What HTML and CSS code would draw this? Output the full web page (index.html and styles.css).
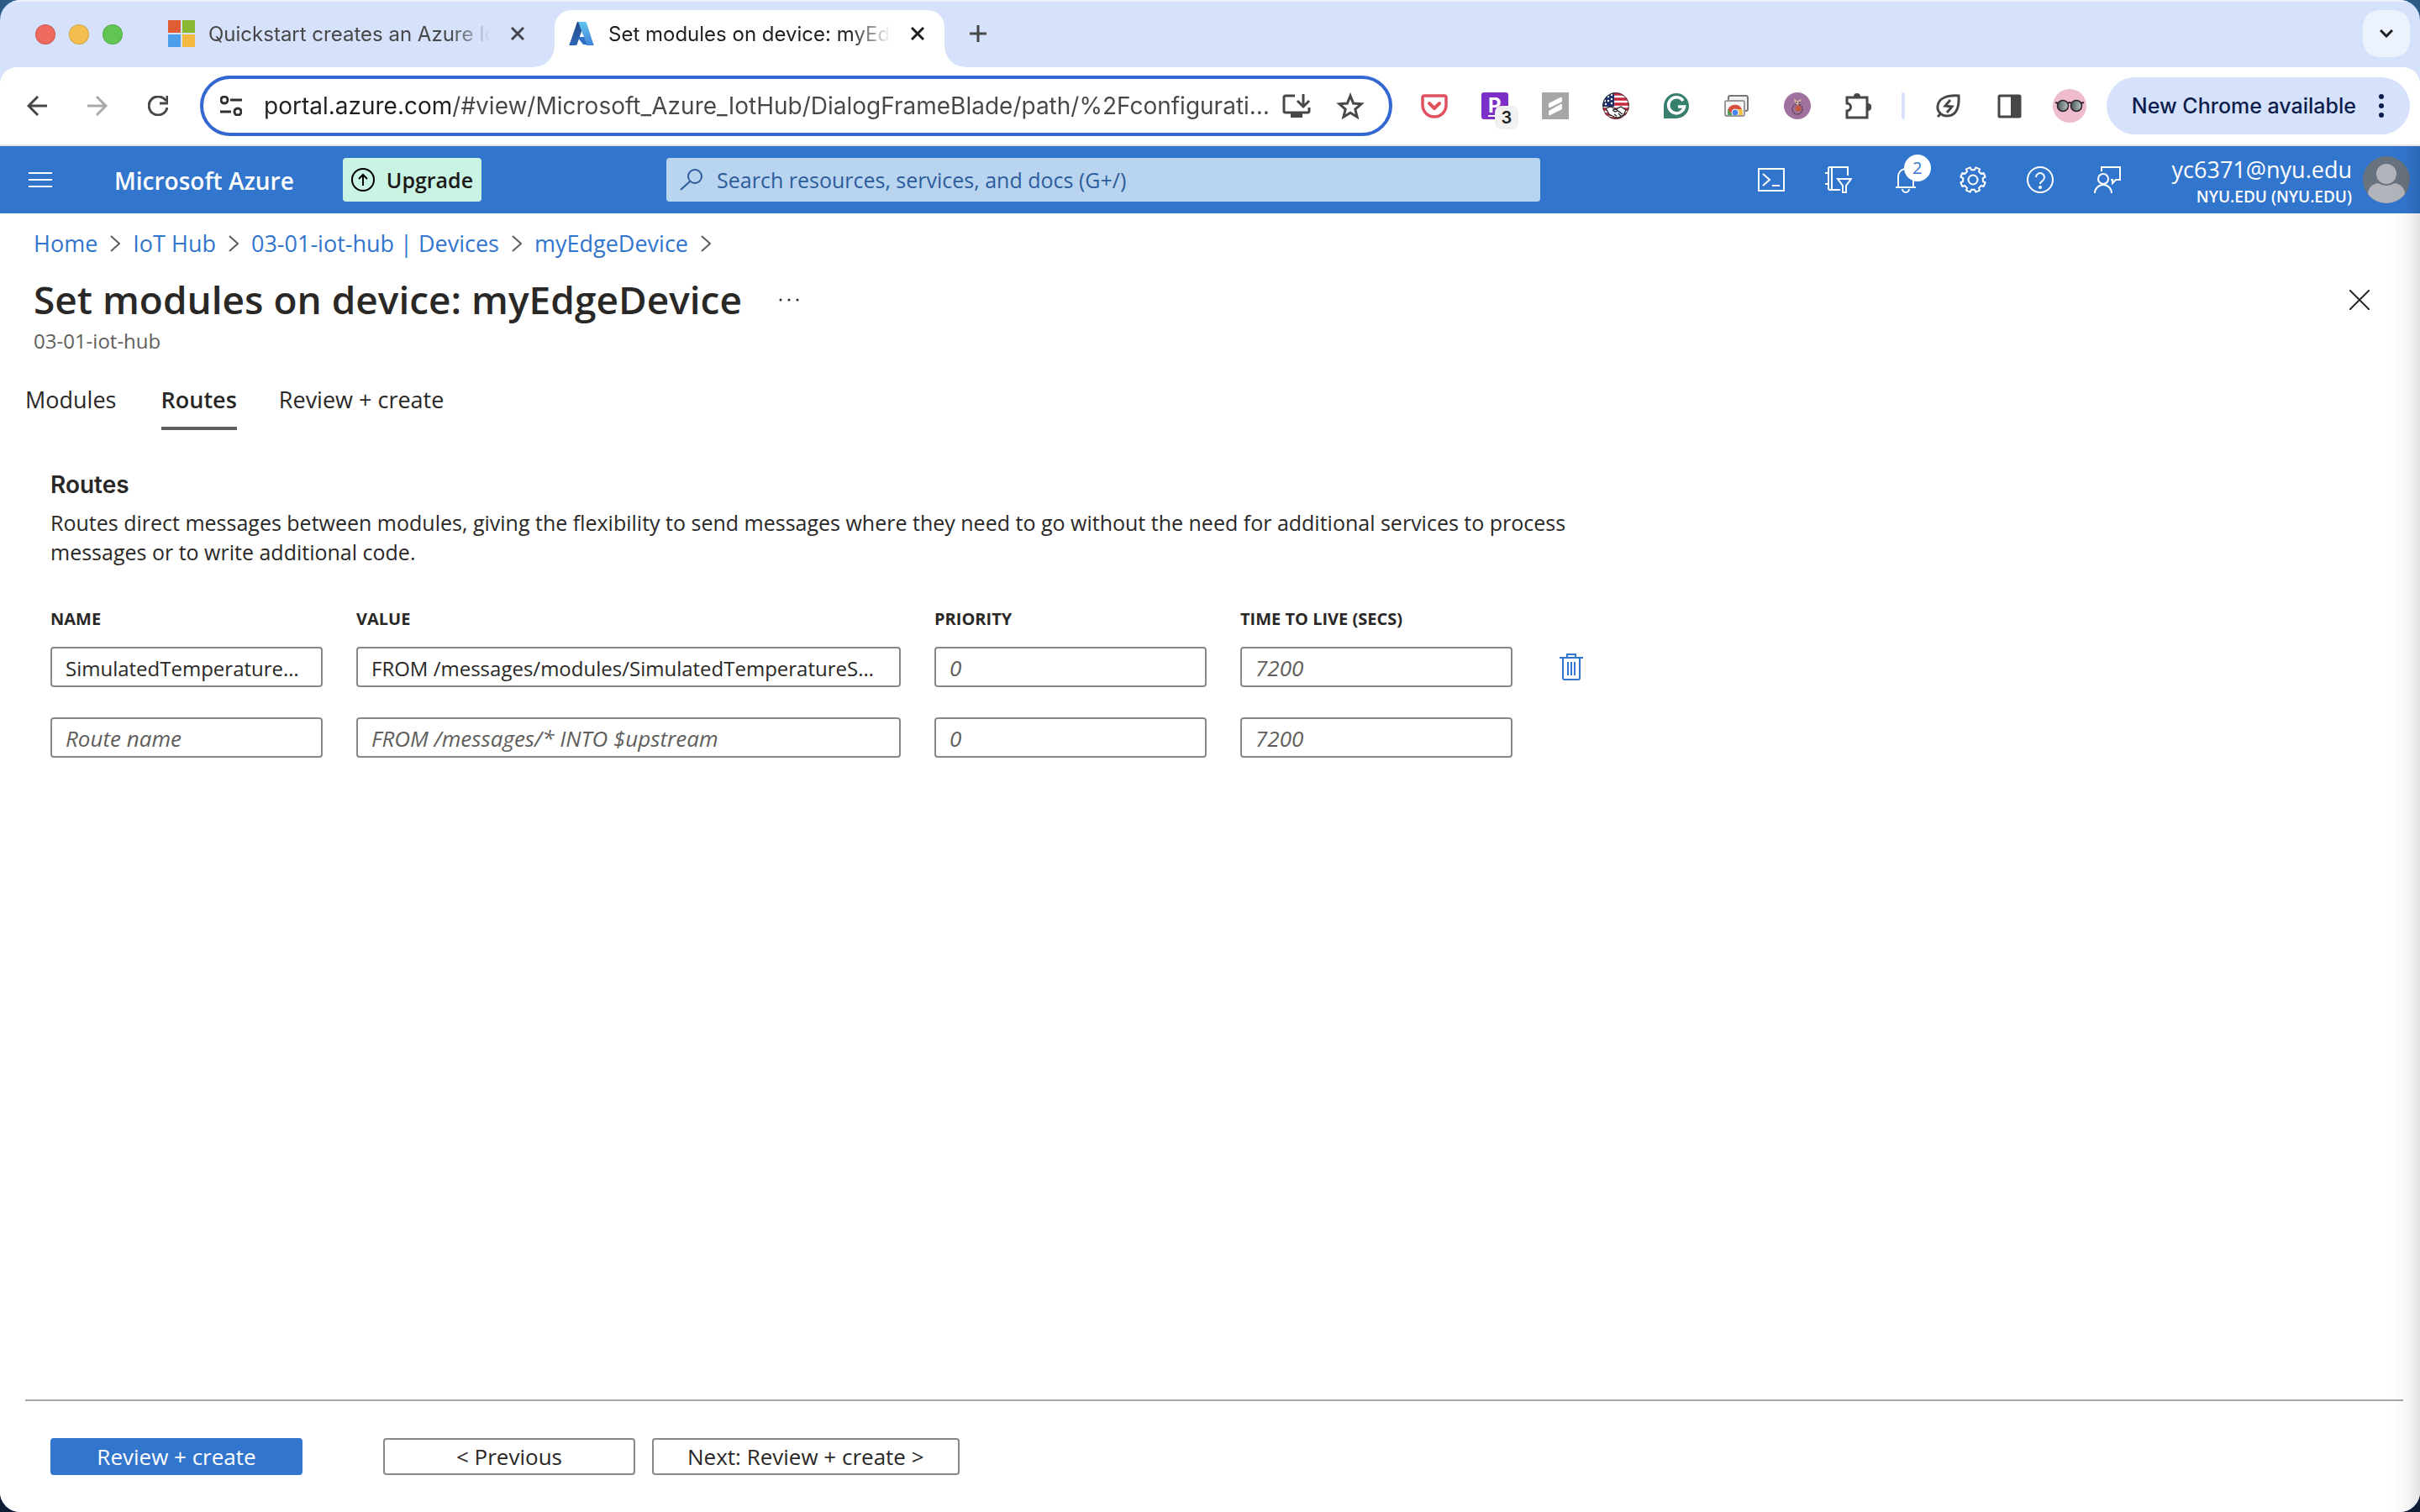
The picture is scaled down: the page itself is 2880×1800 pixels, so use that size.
FILE: index.html
```html
<!DOCTYPE html>
<html lang="en">
<head>
<meta charset="utf-8">
<title>Set modules on device: myEdgeDevice - Microsoft Azure</title>
<link rel="stylesheet" href="styles.css">
</head>
<body>
<div class="window">

  <div class="tabstrip">
    <div class="lights">
      <span class="light light-red"></span>
      <span class="light light-yellow"></span>
      <span class="light light-green"></span>
    </div>
    <div class="tab">
      <svg class="icon" viewBox="0 0 32 32" aria-hidden="true"><path fill="#e05c34" d="M0 0h15v15H0z"/><path fill="#8ab833" d="M17 0h15v15H17z"/><path fill="#4a9fe8" d="M0 17h15v15H0z"/><path fill="#f5b940" d="M17 17h15v15H17z"/></svg>
      <span class="tab-title">Quickstart creates an Azure IoT Edge device</span>
      <button class="bare" aria-label="Close tab"><svg class="icon-close" viewBox="0 0 16 16"><path d="M1 1l14 14M15 1L1 15"/></svg></button>
    </div>
    <div class="tab tab-active">
      <svg class="icon" viewBox="0 0 32 32" aria-hidden="true">
        <defs>
          <linearGradient id="az-dark" x1="0" y1="0" x2="0" y2="1"><stop offset="0" stop-color="#234a86"/><stop offset="1" stop-color="#2d66b8"/></linearGradient>
          <linearGradient id="az-light" x1="0" y1="0" x2="0" y2="1"><stop offset="0" stop-color="#62c4f0"/><stop offset="1" stop-color="#3f83d8"/></linearGradient>
        </defs>
        <path fill="url(#az-dark)" d="M11 2h9l-9 26a2 2 0 0 1-2 2H3a1 1 0 0 1-1-2z"/>
        <path fill="#2f6fc4" d="M11 20h13l2 9h-8z"/>
        <path fill="url(#az-light)" d="M12 2h8a2 2 0 0 1 2 1l8 25a1 1 0 0 1-1 2h-8a2 2 0 0 0 1-2z"/>
      </svg>
      <span class="tab-title">Set modules on device: myEdgeDevice</span>
      <button class="bare" aria-label="Close tab"><svg class="icon-close" viewBox="0 0 16 16"><path d="M1 1l14 14M15 1L1 15"/></svg></button>
    </div>
    <button class="bare new-tab" aria-label="New tab"><svg class="icon-plus" viewBox="0 0 20 20"><path d="M10 0v20M0 10h20"/></svg></button>
    <button class="tab-search" aria-label="Search tabs"><svg viewBox="0 0 16 10"><path d="M1 1l7 7 7-7"/></svg></button>
  </div>

  <div class="toolbar">
    <div class="nav-buttons">
      <button class="bare" aria-label="Back"><svg viewBox="0 0 24 24"><path d="M24 12H2M13 1L2 12l11 11"/></svg></button>
      <button class="bare disabled" aria-label="Forward" disabled><svg viewBox="0 0 24 24"><path d="M0 12h22M11 1l11 11-11 11"/></svg></button>
      <button class="bare" aria-label="Reload"><svg viewBox="0 0 24 24"><path d="M21.500 6A11 11 0 1 0 23 14M23 0v9h-9"/></svg></button>
    </div>
    <div class="omnibox">
      <button class="bare" aria-label="View site information"><svg class="tune" viewBox="0 0 26 24"><circle cx="5" cy="5" r="4"/><path d="M12 5h14M0 19h13"/><circle cx="21" cy="19" r="4"/></svg></button>
      <input class="url" type="text" aria-label="Address" value="portal.azure.com/#view/Microsoft_Azure_IotHub/DialogFrameBlade/path/%2Fconfigurations%2FmyEdgeDevice">
      <button class="bare" aria-label="Install app"><svg class="stroke-dark install" viewBox="0 0 34 32"><path d="M15 4H4a2 2 0 0 0-2 2v16a2 2 0 0 0 2 2h26a2 2 0 0 0 2-2v-4M25 2v14M18 10l7 7 7-7"/><path class="solid" d="M10 24h14v6H10z"/></svg></button>
      <button class="bare" aria-label="Bookmark"><svg class="stroke-dark star" viewBox="0 0 34 32"><path d="M17 4l3.600 9 9.400.8-7.200 6.200 2.300 9.200L17 24.200l-8.100 5 2.300-9.200L4 13.800l9.400-.8z"/></svg></button>
    </div>

    <div class="extensions">
      <button class="bare" aria-label="Pocket"><svg class="icon" viewBox="0 0 32 32"><path fill="none" stroke="#e0505f" stroke-width="3.500" d="M4 4h24a2 2 0 0 1 2 2v9a14 14 0 0 1-28 0V6a2 2 0 0 1 2-2z"/><path fill="none" stroke="#e0505f" stroke-width="4" stroke-linecap="round" stroke-linejoin="round" d="M10 13l6 6 6-6"/></svg></button>
      <button class="bare ext-p" aria-label="Extension, 3 items"><span class="ext-p-letter">P</span><span class="ext-count">3</span></button>
      <button class="bare" aria-label="Scribe"><svg class="icon" viewBox="0 0 32 32"><path fill="#a6a6a6" d="M0 0h32v32H0z"/><path fill="#fff" d="M8 14q0-1 1-1.500L22 6q2-1 2 1v3q0 1-1 1.500L10 18q-2 1-2-1z"/><path fill="#fff" d="M24 15v4q0 1-1 1.500L10 27q-2 1-2-1v-3q0-1 1-1.500L22 14q2-1 2 1z"/></svg></button>
      <button class="bare" aria-label="Flag extension"><svg class="icon" viewBox="0 0 32 32"><clipPath id="disc"><circle cx="16" cy="16" r="16"/></clipPath><g clip-path="url(#disc)"><path fill="#fff" d="M0 0h32v32H0z"/><path stroke="#c8293c" stroke-width="3.500" d="M13 2h19M13 8h19M13 14h19M0 20h32M0 26h32M0 31h32"/><path fill="#1d2f6b" d="M0 0h14v17H0z"/><g fill="#fff"><circle cx="7" cy="5" r="1.200"/><circle cx="11" cy="3" r="1.200"/><circle cx="11" cy="8" r="1.200"/><circle cx="3" cy="10" r="1.200"/><circle cx="7" cy="10" r="1.200"/><circle cx="11" cy="13" r="1.200"/><circle cx="4" cy="14" r="1.200"/></g><path fill="#fff" stroke="#222" stroke-width="1.200" d="M4 19l6-2 6 3 6-3 6 4-3 6-6 3-5-1-6-3z"/><path fill="none" stroke="#222" stroke-width="1.200" d="M12 21l4-1 8 6M12 21l3 2 3-1M14 26l3 2M19 25l3 3"/></g><circle cx="16" cy="16" r="15.300" fill="none" stroke="#333" stroke-width="1"/></svg></button>
      <button class="bare" aria-label="Grammarly"><svg class="icon" viewBox="0 0 32 32"><path fill="#38806e" d="M1 31V16A15 15 0 1 1 16 31z"/><path fill="none" stroke="#fff" stroke-width="3.500" d="M24 10a9.500 9.500 0 1 0 1.500 7H18"/></svg></button>
      <button class="bare" aria-label="Chrome windows"><svg class="icon" viewBox="0 0 32 32"><rect x="6" y="4" width="23" height="18" rx="2" fill="#f1f1f1" stroke="#777" stroke-width="2"/><rect x="2" y="10" width="23" height="18" rx="2" fill="#f5f5f5" stroke="#999" stroke-width="2"/><path fill="#d9503f" d="M5 22a9 9 0 0 1 17-2h-8l-5 7H5z"/><path fill="#f3c242" d="M15 20h7.500l.5 7h-6z"/><path fill="#4da35a" d="M5 20l6 7H5z"/><circle cx="14" cy="24" r="4" fill="#4a84ee" stroke="#fff" stroke-width="1"/><path stroke="#999" stroke-width="2" d="M3 28h21"/></svg></button>
      <button class="bare" aria-label="Cat extension"><svg class="icon" viewBox="0 0 32 32"><circle cx="16" cy="16" r="16" fill="#a0709f"/><circle cx="16" cy="20" r="6" fill="none" stroke="#54404a" stroke-width="1.500" stroke-dasharray="2 1"/><circle cx="17" cy="19" r="3.500" fill="#c0583c"/><path fill="#d8c0a8" d="M12 7l3 3h2l4-3-2 5-3 3-3-3z"/><path fill="#403038" d="M14 11h1.500v1.500H14zM17.500 11H19v1.500h-1.500z"/></svg></button>
      <button class="bare" aria-label="Extensions"><svg class="icon stroke-dark" viewBox="0 0 32 32"><path d="M3 6h24v24H3v-8a4.500 4.500 0 0 0 0-9z"/><path class="solid" d="M11 5a4 4 0 0 1 8 0zM28 13a4 4 0 0 1 0 9z"/></svg></button>
    </div>
    <span class="divider"></span>
    <div class="extensions">
      <button class="bare" aria-label="Energy saver"><svg class="icon stroke-dark" viewBox="0 0 32 32"><path d="M28 4c-14-1-24 3-25 12-1 6 4 12 11 12 10 0 15-8 14-24z"/><path d="M7 25l-4 4M18 9l-6 7 8 1-6 7"/></svg></button>
      <button class="bare" aria-label="Side panel"><svg class="icon stroke-dark" viewBox="0 0 32 32"><rect x="4" y="4" width="25" height="25" rx="1"/><path class="solid" d="M18 4h11v25H18z"/></svg></button>
    </div>
    <button class="bare profile" aria-label="Profile"><svg viewBox="0 0 40 40"><defs><linearGradient id="lens"><stop offset="0" stop-color="#4a5458"/><stop offset="1" stop-color="#b8c4c6"/></linearGradient></defs><circle cx="20" cy="20" r="20" fill="#efbccf"/><g fill="url(#lens)" stroke="#2a2426" stroke-width="1.500"><circle cx="12" cy="20" r="6.500"/><circle cx="28" cy="20" r="6.500"/></g><path fill="none" stroke="#2a2426" stroke-width="2" d="M3 16l4 1M37 16l-4 1M18 17q2-2 4 0"/></svg></button>
    <button class="update">New Chrome available<svg viewBox="0 0 8 28" aria-hidden="true"><circle cx="4" cy="3" r="3"/><circle cx="4" cy="14" r="3"/><circle cx="4" cy="25" r="3"/></svg></button>
  </div>

  <div class="portal">
    <header class="topbar">
      <button class="bare menu" aria-label="Show portal menu"><svg viewBox="0 0 28 18"><path d="M0 1h28M0 9h28M0 17h28"/></svg></button>
      <a class="brand" href="#home">Microsoft Azure</a>
      <button class="upgrade"><svg viewBox="0 0 28 28" aria-hidden="true"><circle cx="14" cy="14" r="13"/><path d="M14 21V8M9 13l5-5 5 5"/></svg>Upgrade</button>
      <div class="search">
        <svg viewBox="0 0 28 26" aria-hidden="true"><circle cx="18" cy="9" r="8"/><path d="M12 15L1 25"/></svg>
        <input type="text" aria-label="Search" placeholder="Search resources, services, and docs (G+/)">
      </div>
      <nav class="tools" aria-label="Portal tools">
        <button class="bare" aria-label="Cloud Shell"><svg viewBox="0 0 32 32"><path d="M1 3h30v26H1z"/><path d="M6 9l8 7-8 7M17 23h9"/></svg></button>
        <button class="bare" aria-label="Directories and subscriptions"><svg viewBox="0 0 32 32"><path d="M27 11V1H6a2 2 0 0 0-2 2v23a2 2 0 0 0 2 2h12M8 1v27M0 8h5M0 21h5"/><path d="M15 15h16l-6 8v8h-4v-8z"/></svg></button>
        <button class="bare bell" aria-label="Notifications, 2 new"><svg viewBox="0 0 32 32"><path d="M4 25h24M7 25V12a9 9 0 0 1 18 0v13M12 27a4 4 0 0 0 8 0"/></svg><span class="badge">2</span></button>
        <button class="bare" aria-label="Settings"><svg viewBox="0 0 32 32"><g transform="translate(16 16)"><path stroke-linejoin="round" d="M11.840 1.980L14.640 3.250 12.650 8.060 9.770 6.970 6.970 9.770 8.060 12.650 3.250 14.640 1.980 11.840-1.980 11.840-3.250 14.640-8.060 12.650-6.970 9.770-9.770 6.970-12.650 8.060-14.640 3.250-11.840 1.980-11.840-1.980-14.640-3.250-12.650-8.060-9.770-6.970-6.970-9.770-8.060-12.650-3.250-14.640-1.980-11.840 1.980-11.840 3.250-14.640 8.060-12.650 6.970-9.770 9.770-6.970 12.650-8.060 14.640-3.250 11.840-1.980z"/><circle r="5.500"/></g></svg></button>
        <button class="bare" aria-label="Help"><svg viewBox="0 0 32 32"><circle cx="16" cy="16" r="15"/><path d="M11 13a5 5 0 1 1 8 4q-3 2-3 4"/><circle class="dot" cx="16" cy="25" r="2"/></svg></button>
        <button class="bare" aria-label="Feedback"><svg viewBox="0 0 32 32"><path d="M9 6V1h22v15h-5l-4 4v-4h-2"/><circle cx="11" cy="15" r="6"/><path d="M1 32a10 10 0 0 1 20 0"/></svg></button>
      </nav>
      <button class="bare account">
        <span class="account-text"><span class="email">yc6371@nyu.edu</span><span class="tenant">NYU.EDU (NYU.EDU)</span></span>
        <svg viewBox="0 0 56 56" aria-hidden="true"><clipPath id="face"><circle cx="28" cy="28" r="28"/></clipPath><g clip-path="url(#face)"><path fill="#69737f" d="M0 0h56v56H0z"/><circle cx="28" cy="21" r="12" fill="#b1b4ba"/><path fill="#b1b4ba" d="M6 56V46q0-12 12-14 10 6 20 0 12 2 12 14v10z"/></g></svg>
      </button>
    </header>

    <main class="blade">
      <nav class="crumbs" aria-label="Breadcrumb">
        <a href="#home">Home</a><svg viewBox="0 0 12 20"><path d="M1 1l10 9-10 9"/></svg>
        <a href="#hub">IoT Hub</a><svg viewBox="0 0 12 20"><path d="M1 1l10 9-10 9"/></svg>
        <a href="#devices">03-01-iot-hub | Devices</a><svg viewBox="0 0 12 20"><path d="M1 1l10 9-10 9"/></svg>
        <a href="#device">myEdgeDevice</a><svg viewBox="0 0 12 20"><path d="M1 1l10 9-10 9"/></svg>
      </nav>
      <div class="title-row">
        <h1>Set modules on device: myEdgeDevice</h1>
        <button class="bare more" aria-label="More"><svg viewBox="0 0 24 4"><circle cx="2" cy="2" r="1.500"/><circle cx="12" cy="2" r="1.500"/><circle cx="22" cy="2" r="1.500"/></svg></button>
        <button class="bare close-blade" aria-label="Close"><svg viewBox="0 0 24 24"><path d="M0 0l24 24M24 0L0 24"/></svg></button>
      </div>
      <p class="subtitle">03-01-iot-hub</p>

      <div class="steps" role="tablist">
        <button class="step" role="tab" data-label="Modules">Modules</button>
        <button class="step step-active" role="tab" aria-selected="true" data-label="Routes">Routes</button>
        <button class="step" role="tab" data-label="Review + create">Review + create</button>
      </div>

      <section class="panel">
        <h2>Routes</h2>
        <p class="intro">Routes direct messages between modules, giving the flexibility to send messages where they need to go without the need for additional services to process messages or to write additional code.</p>
        <table class="routes">
          <colgroup><col class="col-small"><col class="col-wide"><col class="col-small"><col class="col-small"><col class="col-action"></colgroup>
          <thead>
            <tr><th id="h-name">NAME</th><th id="h-value">VALUE</th><th id="h-priority">PRIORITY</th><th id="h-ttl">TIME TO LIVE (SECS)</th><td></td></tr>
          </thead>
          <tbody>
            <tr>
              <td><input type="text" aria-labelledby="h-name" value="SimulatedTemperatureSensorToIoTHub"></td>
              <td><input type="text" aria-labelledby="h-value" value="FROM /messages/modules/SimulatedTemperatureSensor/* INTO $upstream"></td>
              <td><input type="text" aria-labelledby="h-priority" placeholder="0"></td>
              <td><input type="text" aria-labelledby="h-ttl" placeholder="7200"></td>
              <td><button class="bare delete" aria-label="Delete route"><svg viewBox="0 0 28 32"><path d="M0 5h28M9 5V1h10v4M4 5v24a2 2 0 0 0 2 2h16a2 2 0 0 0 2-2V5"/><path d="M10 10v16M14 10v16M18 10v16"/></svg></button></td>
            </tr>
            <tr>
              <td><input type="text" aria-labelledby="h-name" placeholder="Route name"></td>
              <td><input type="text" aria-labelledby="h-value" placeholder="FROM /messages/* INTO $upstream"></td>
              <td><input type="text" aria-labelledby="h-priority" placeholder="0"></td>
              <td><input type="text" aria-labelledby="h-ttl" placeholder="7200"></td>
              <td></td>
            </tr>
          </tbody>
        </table>
      </section>
    </main>

    <footer class="actions">
      <button class="btn btn-primary">Review + create</button>
      <button class="btn">&lt; Previous</button>
      <button class="btn">Next: Review + create &gt;</button>
    </footer>
  </div>
</div>
</body>
</html>
```
FILE: styles.css
```css
:root {
  --chrome-font: Inter, Roboto, sans-serif;
  --portal-font: "Open Sans", "Noto Sans", sans-serif;
  --blue: #3275cd;
  --ink: #292827;
  --muted: #605e5c;
  --line: #8a8886;
  --chrome-blue: #d6e1fb;
  --chrome-ink: #474747;
}

* { box-sizing: border-box; }

body {
  margin: 0;
  background: linear-gradient(#2c5b88, #0f1c36);
  color: var(--ink);
  font-family: var(--portal-font);
}

button, input { font: inherit; color: inherit; }
button { cursor: pointer; }
a { color: inherit; text-decoration: none; }
svg { display: block; flex: none; fill: none; }
h1, h2, p { margin: 0; }

.bare {
  display: flex;
  align-items: center;
  padding: 0;
  border: 0;
  background: none;
}

.icon { width: 32px; height: 32px; }

.window {
  display: flex;
  flex-direction: column;
  min-height: 100vh;
  border-radius: 24px;
  overflow: hidden;
  background: var(--chrome-blue);
}

/* Browser tabs */
.tabstrip {
  display: flex;
  align-items: center;
  height: 80px;
  padding: 10px 12px 0 42px;
  border-top: 2px solid #eef2fd;
  font-family: var(--chrome-font);
  font-size: 24px;
  color: var(--chrome-ink);
}

.lights { display: flex; gap: 16px; padding-bottom: 10px; }
.light { width: 24px; height: 24px; border-radius: 50%; border: 1px solid #0002; }
.light-red { background: #ec6a5e; }
.light-yellow { background: #f4bf4f; }
.light-green { background: #61c554; }

.tab {
  position: relative;
  display: flex;
  align-items: center;
  gap: 16px;
  width: 464px;
  height: 68px;
  padding: 0 24px 12px 16px;
}

.lights + .tab { margin-left: 38px; width: 476px; padding-right: 36px; }

.tab-active {
  border-radius: 20px 20px 0 0;
  background: #fff;
  color: #1f1f1f;
}

.tab-active::before,
.tab-active::after {
  content: "";
  position: absolute;
  bottom: 0;
  width: 24px;
  height: 24px;
}
.tab-active::before { right: 100%; background: radial-gradient(circle at 0 0, #fff0 23px, #fff 24px); }
.tab-active::after { left: 100%; background: radial-gradient(circle at 100% 0, #fff0 23px, #fff 24px); }

.tab-title {
  flex: 1;
  overflow: hidden;
  white-space: nowrap;
  margin-right: 8px;
  -webkit-mask-image: linear-gradient(to left, transparent, #000 48px);
  mask-image: linear-gradient(to left, transparent, #000 48px);
}

.icon-close { width: 16px; height: 16px; stroke: currentColor; stroke-width: 3; }
.icon-plus { width: 20px; height: 20px; stroke: currentColor; stroke-width: 3; }
.new-tab { margin-left: 30px; padding-bottom: 12px; }

.tab-search {
  display: flex;
  align-items: center;
  justify-content: center;
  width: 56px;
  height: 56px;
  margin: 0 0 12px auto;
  padding: 0;
  border: 0;
  border-radius: 20px;
  background: #ecf3fd;
}
.tab-search svg { width: 16px; height: 10px; stroke: #1f1f1f; stroke-width: 3; }

/* Browser toolbar */
.toolbar {
  display: flex;
  align-items: center;
  height: 94px;
  padding: 0 12px 0 32px;
  border-bottom: 2px solid #dfe3e3;
  border-radius: 20px 20px 0 0;
  background: #fff;
  font-family: var(--chrome-font);
}

.nav-buttons { display: flex; gap: 48px; }
.nav-buttons svg { width: 24px; height: 24px; stroke: var(--chrome-ink); stroke-width: 3; }
.nav-buttons .disabled svg { stroke: #a9a9a9; }

.omnibox {
  display: flex;
  flex: 1;
  align-items: center;
  height: 72px;
  margin: 0 34px 0 38px;
  padding: 0 29px 0 20px;
  border: 4px solid #3367d1;
  border-radius: 36px;
}

.tune { width: 26px; height: 24px; stroke: #303030; stroke-width: 3; }

.url {
  flex: 1;
  min-width: 0;
  margin: 0 8px 0 26px;
  padding: 0;
  border: 0;
  outline: 0;
  font-size: 28px;
  line-height: 40px;
  text-overflow: ellipsis;
  color: transparent;
  background: linear-gradient(to right, #1f1f1f 222px, #474747 222px);
  -webkit-background-clip: text;
  background-clip: text;
}

.stroke-dark { stroke: var(--chrome-ink); stroke-width: 3; }
.solid { fill: var(--chrome-ink); stroke: none; }
.install, .star { width: 34px; height: 32px; }
.omnibox .bare:last-child { margin-left: 30px; }

.extensions { display: flex; gap: 40px; }

.ext-p {
  position: relative;
  justify-content: center;
  width: 32px;
  height: 32px;
  border-radius: 3px;
  background: #7b2fc6;
  color: #fff;
}
.ext-p-letter { font-size: 24px; font-weight: 700; line-height: 28px; text-decoration: underline; text-underline-offset: 3px; }
.ext-count {
  position: absolute;
  left: 16px;
  top: 16px;
  width: 28px;
  border-radius: 8px;
  background: #f1f1f1;
  color: #1f1f1f;
  font-size: 20px;
  font-weight: 600;
  line-height: 28px;
  text-align: center;
}

.divider { width: 4px; height: 32px; margin: 0 36px; border-radius: 2px; background: var(--chrome-blue); }

.profile { margin: 0 24px 0 36px; }
.profile svg { width: 40px; height: 40px; }

.update {
  display: flex;
  align-items: center;
  gap: 26px;
  height: 68px;
  padding: 0 30px;
  border: 0;
  border-radius: 34px;
  background: var(--chrome-blue);
  color: #0a1d4d;
  font-size: 25px;
  font-weight: 500;
  white-space: nowrap;
}
.update svg { width: 8px; height: 28px; fill: #0a1d4d; }

/* Portal */
.portal {
  position: relative;
  display: flex;
  flex: 1;
  flex-direction: column;
  background: #fff;
}

/* Soft shade along the right edge of the window */
.portal::after {
  content: "";
  position: absolute;
  inset: 0 0 0 auto;
  width: 36px;
  background: linear-gradient(to right, #0000, #00000006 50%, #0000001c);
  pointer-events: none;
}

.topbar {
  display: flex;
  align-items: center;
  height: 80px;
  padding: 0 12px 0 34px;
  background: var(--blue);
  color: #fff;
}

.menu svg { width: 28px; height: 18px; stroke: #fff; stroke-width: 2; }

.brand {
  margin: 2px 58px 0 74px;
  font-size: 28px;
  font-weight: 600;
  white-space: nowrap;
}

.upgrade {
  display: flex;
  align-items: center;
  gap: 14px;
  height: 52px;
  margin-right: 220px;
  padding: 0 10px;
  border: 0;
  border-radius: 4px;
  background: #c9f3e3;
  color: #1b1a19;
  font-size: 25px;
  font-weight: 600;
}
.upgrade svg { width: 28px; height: 28px; stroke: #000; stroke-width: 2; }

.search {
  display: flex;
  flex: 0 1 1040px;
  align-items: center;
  gap: 16px;
  height: 52px;
  padding: 0 16px;
  border-radius: 4px;
  background: #b9d4ef;
}
.search svg { width: 28px; height: 26px; stroke: #2c5c9c; stroke-width: 2; }
.search input {
  flex: 1;
  min-width: 0;
  padding: 0;
  border: 0;
  background: none;
  font-size: 25px;
}
.search input::placeholder { color: #2c5c9c; opacity: 1; }

.tools { display: flex; gap: 48px; margin-left: auto; }
.tools svg { width: 32px; height: 32px; stroke: #fff; stroke-width: 2; }
.tools .dot { fill: #fff; stroke: none; }

.bell { position: relative; }
.badge {
  position: absolute;
  left: 14px;
  top: -14px;
  width: 32px;
  border-radius: 50%;
  background: #fff;
  color: var(--blue);
  font-size: 20px;
  line-height: 32px;
  text-align: center;
}

.account { gap: 13px; margin-left: 61px; }
.account svg { width: 56px; height: 56px; }
.account-text { display: flex; flex-direction: column; align-items: flex-end; padding-top: 8px; line-height: 32px; white-space: nowrap; }
.email { font-size: 27px; }
.tenant { font-size: 19px; font-weight: 600; }

.blade { flex: 1; padding: 16px 60px 40px 30px; }

.crumbs {
  display: flex;
  align-items: center;
  gap: 15px;
  padding-left: 10px;
  color: var(--blue);
  font-size: 27px;
  line-height: 40px;
}
.crumbs svg { width: 12px; height: 20px; stroke: var(--muted); stroke-width: 2; }

.title-row { display: flex; align-items: center; margin-top: 16px; padding-left: 10px; }
h1 { font-size: 46px; font-weight: 600; line-height: 60px; }
.more, .close-blade { padding-top: 2px; }
.more { margin-left: 44px; }
.more svg { width: 24px; height: 4px; fill: var(--ink); }
.close-blade { margin-left: auto; }
.close-blade svg { width: 24px; height: 24px; stroke: var(--ink); stroke-width: 2; }

.subtitle { padding-left: 10px; color: var(--muted); font-size: 24px; line-height: 40px; }

.steps { display: flex; gap: 50px; margin-top: 32px; }
.step {
  padding: 0 0 14px;
  border: 0;
  border-bottom: 4px solid transparent;
  background: none;
  font-size: 27px;
  line-height: 36px;
  text-align: left;
}
/* Reserves the bold width so that tabs do not shift when selected */
.step::after {
  content: attr(data-label);
  display: block;
  height: 0;
  overflow: hidden;
  visibility: hidden;
  font-weight: 600;
}
.step-active { border-color: var(--muted); font-weight: 600; }

.panel { padding: 47px 0 0 30px; }
h2 { font-family: var(--chrome-font); font-size: 28px; font-weight: 600; line-height: 36px; }
.intro { max-width: 1820px; margin-top: 10px; font-size: 25px; line-height: 35px; }

.routes { margin-top: 48px; border-collapse: collapse; table-layout: fixed; width: 1830px; max-width: 100%; }
.col-small { width: 364px; }
.col-wide { width: 688px; }
.col-action { width: 50px; }
.routes th { padding: 0 0 19px; font-size: 20px; font-weight: 700; line-height: 28px; text-align: left; }
.routes td { padding: 0 40px 36px 0; vertical-align: top; }
.routes thead td { padding: 0; }
.routes td:last-child { padding-right: 0; }
.routes input {
  display: block;
  width: 100%;
  height: 48px;
  padding: 2px 20px 0 16px;
  border: 2px solid var(--line);
  border-radius: 4px;
  background: #fff;
  font-size: 24px;
  text-overflow: ellipsis;
}
.routes input:placeholder-shown { font-size: 26px; font-style: italic; }
.routes input::placeholder { color: var(--muted); opacity: 1; }
.delete { height: 48px; margin-left: 16px; }
.delete svg { width: 28px; height: 32px; stroke: var(--blue); stroke-width: 2; }

.actions {
  display: flex;
  gap: 20px;
  margin: 0 20px 0 30px;
  padding: 44px 30px;
  border-top: 2px solid #a6a6a6;
}
.btn {
  min-width: 300px;
  height: 44px;
  padding: 0 40px;
  border: 2px solid var(--line);
  border-radius: 4px;
  background: #fff;
  font-size: 26px;
  line-height: 36px;
}
.btn-primary { margin-right: 76px; border-color: var(--blue); background: var(--blue); color: #fff; }
```
